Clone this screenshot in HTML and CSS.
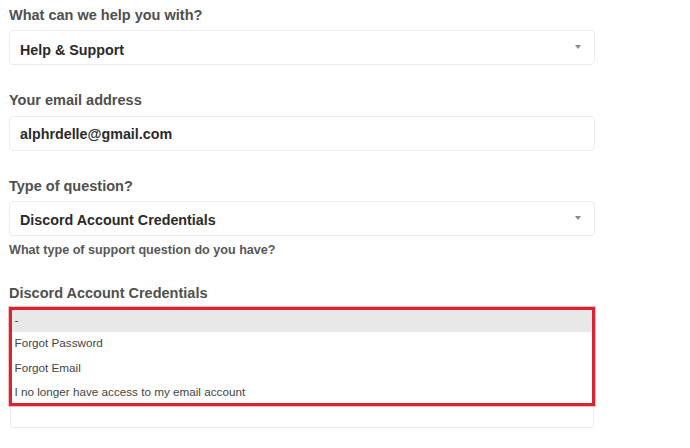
FILE: index.html
```html
<!DOCTYPE html>
<html lang="en">
<head>
<meta charset="utf-8">
<title>Support form</title>
<link rel="stylesheet" href="styles.css">
</head>
<body>
<form class="form">
  <div class="field">
    <div class="label">What can we help you with?</div>
    <div class="box select first">
      <span class="value">Help &amp; Support</span>
      <span class="arrow"></span>
    </div>
  </div>
  <div class="field">
    <div class="label">Your email address</div>
    <div class="box">
      <span class="value">alphrdelle@gmail.com</span>
    </div>
  </div>
  <div class="field last">
    <div class="label">Type of question?</div>
    <div class="box select">
      <span class="value">Discord Account Credentials</span>
      <span class="arrow"></span>
    </div>
    <div class="help">What type of support question do you have?</div>
  </div>
  <div class="field">
    <div class="label tight">Discord Account Credentials</div>
    <div class="listbox">
      <div class="highlight">
        <div class="option selected">-</div>
        <div class="option">Forgot Password</div>
        <div class="option">Forgot Email</div>
        <div class="option end">I no longer have access to my email account</div>
      </div>
      <div class="rest"></div>
    </div>
  </div>
</form>
</body>
</html>
```
FILE: styles.css
```css
html, body {
  margin: 0;
  padding: 0;
  background: #ffffff;
}
body {
  font-family: "Liberation Sans", Arial, sans-serif;
}
.form {
  width: 586px;
  padding: 4.5px 0 0 9px;
  display: flex;
  flex-direction: column;
}
.field {
  display: flex;
  flex-direction: column;
  margin-bottom: 25px;
}
.field.last {
  margin-bottom: 24px;
}
.label {
  font-size: 14.5px;
  line-height: 20px;
  font-weight: bold;
  color: #4f4f4f;
  margin-bottom: 5.5px;
}
.label.tight {
  margin-bottom: 4px;
}
.box {
  height: 35px;
  box-sizing: border-box;
  border: 1px solid #ededed;
  border-radius: 4px;
  padding: 7.5px 13px 0 10px;
  display: flex;
  align-items: flex-start;
}
.box.first {
  padding-top: 8.5px;
}
.value {
  font-size: 14.3px;
  line-height: 20px;
  font-weight: bold;
  color: #2a2a2a;
  flex: 1;
}
.arrow {
  width: 0;
  height: 0;
  border-left: 3px solid transparent;
  border-right: 3px solid transparent;
  border-top: 4px solid #8a8a8a;
  margin-top: 6px;
}
.box.first .arrow {
  margin-top: 5px;
}
.help {
  margin-top: 5px;
  font-size: 12.6px;
  line-height: 18px;
  font-weight: bold;
  color: #575757;
}
.listbox {
  margin: 0 1px;
  border: 1px solid #eeeeee;
  border-radius: 3px;
}
.highlight {
  margin: -1px -2px 0 -2px;
  border: 3px solid #d9232e;
  box-shadow: 0 0 0 1px rgba(217, 35, 46, 0.3);
}
.option {
  font-size: 11.7px;
  line-height: 16px;
  color: #444444;
  padding: 3px 0 0 2.5px;
  height: 24.5px;
  box-sizing: border-box;
  white-space: nowrap;
}
.option.selected {
  background: #e8e8e8;
  padding-top: 1.5px;
  height: 22px;
}
.option.end {
  height: 22px;
}
.rest {
  height: 21px;
}
```
